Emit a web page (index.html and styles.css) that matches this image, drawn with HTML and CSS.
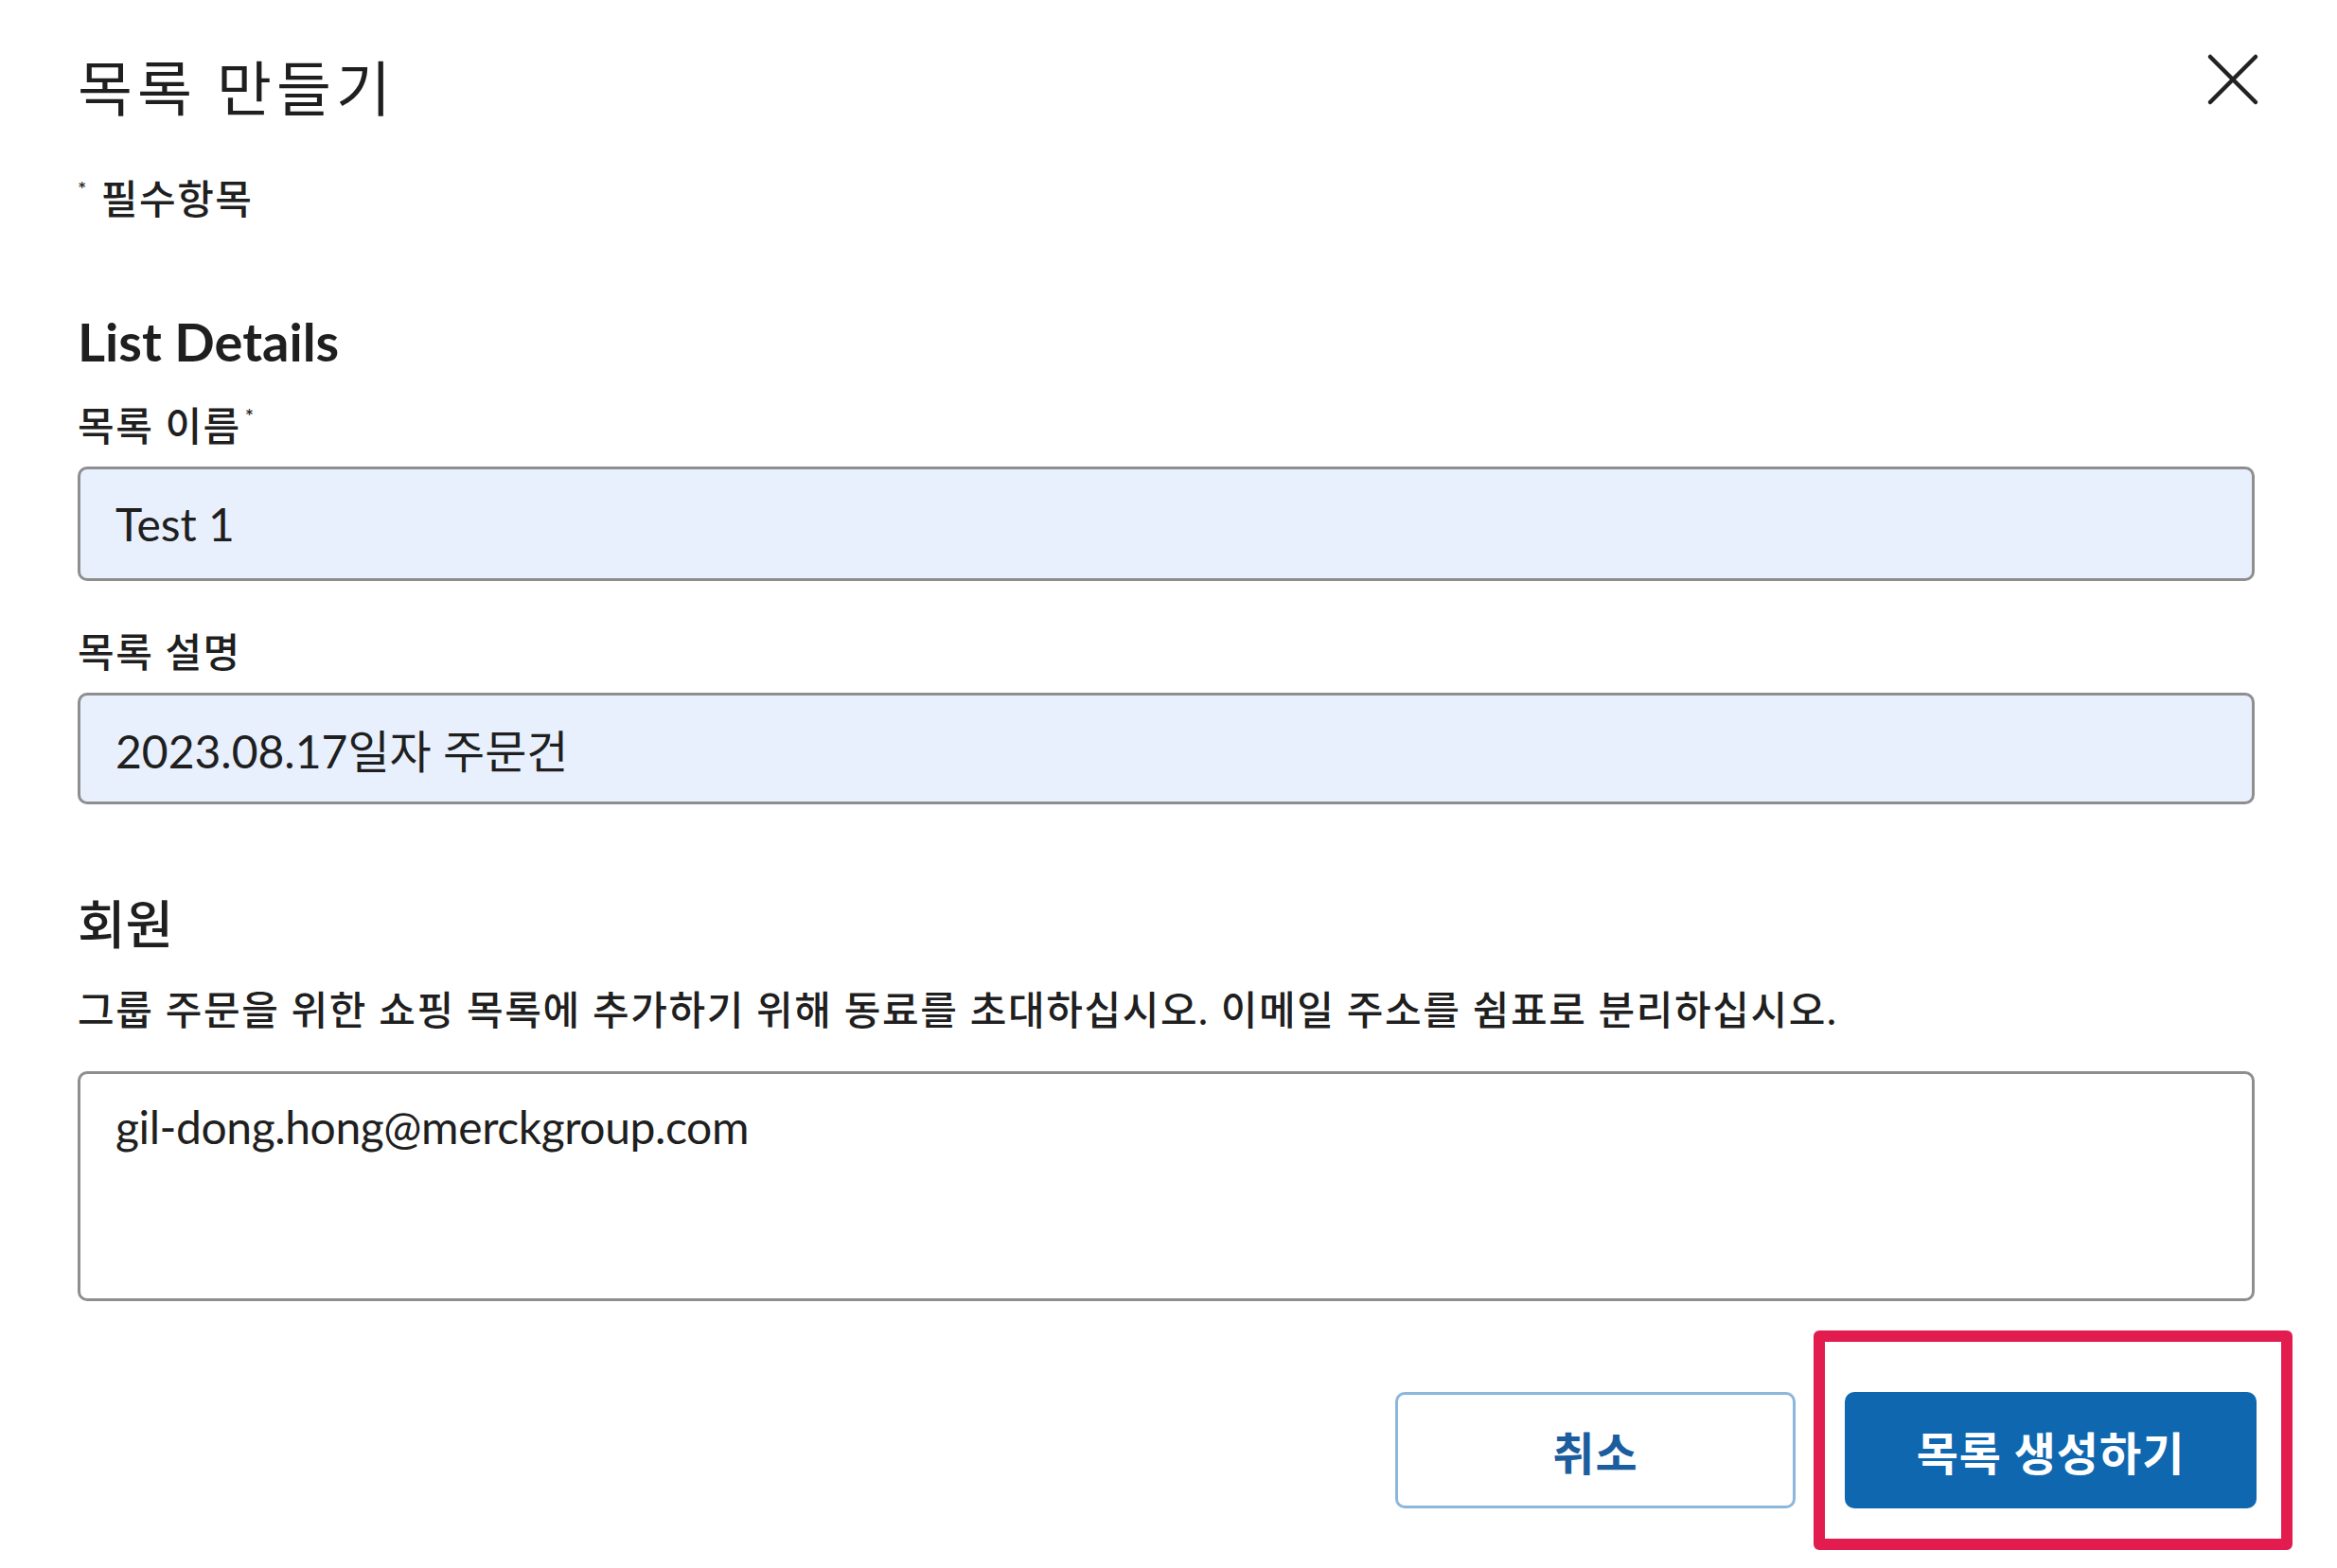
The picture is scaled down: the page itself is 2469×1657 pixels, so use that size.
FILE: index.html
```html
<!doctype html>
<html lang="ko">

<head>
    <meta charset="utf-8">
    <meta name="viewport" content="width=device-width, initial-scale=1">
    <title>목록 만들기</title>
    <link rel="stylesheet" href="styles.css">
</head>

<body>
    <div class="dialog">
        <div class="dialog-head">
            <h1 class="dialog-title">목록 만들기</h1>
            <button class="close-btn" type="button" aria-label="닫기">
                <svg width="56" height="56" viewBox="0 0 56 56">
                    <path d="M4 4 L52 52 M52 4 L4 52" stroke="#222" stroke-width="4.5" stroke-linecap="round" fill="none"/>
                </svg>
            </button>
        </div>
        <p class="required-note"><span class="req">*</span>필수항목</p>

        <h2 class="section-title">List Details</h2>
        <div class="field">
            <label class="field-label" for="list-name">목록 이름<span class="req">*</span></label>
            <input class="field-input" id="list-name" type="text" value="Test 1">
        </div>
        <div class="field field-second">
            <label class="field-label" for="list-desc">목록 설명</label>
            <input class="field-input short" id="list-desc" type="text" value="2023.08.17일자 주문건">
        </div>

        <h2 class="section-title members">회원</h2>
        <p class="section-desc">그룹 주문을 위한 쇼핑 목록에 추가하기 위해 동료를 초대하십시오. 이메일 주소를 쉼표로 분리하십시오.</p>
        <textarea class="field-area" id="members">gil-dong.hong@merckgroup.com</textarea>

        <div class="actions">
            <button class="btn btn-outline" type="button">취소</button>
            <span class="highlight-wrap">
                <button class="btn btn-primary" type="button">목록 생성하기</button>
                <span class="highlight"></span>
            </span>
        </div>
    </div>
</body>

</html>
```

FILE: styles.css
```css
body {
    margin: 0;
    background-color: white;
    color: #1f1f1f;
    font-family: Lato, "Noto Sans CJK KR", sans-serif;
}

.dialog {
    padding: 53px 87px 63px 82px;
}

.dialog-head {
    display: flex;
    justify-content: space-between;
    align-items: flex-start;
}

.dialog-title {
    margin: 0;
    font-size: 63px;
    line-height: 80px;
    font-weight: 400;
    letter-spacing: 5px;
}

.close-btn {
    margin-top: 3px;
    margin-right: -5px;
    padding: 0;
    border: none;
    background: none;
    line-height: 0;
}

.required-note {
    margin: 52px 0 0;
    font-size: 42px;
    line-height: 50px;
    font-weight: 500;
    letter-spacing: 1.5px;
}

.req {
    font-size: 22px;
    vertical-align: top;
    line-height: 30px;
    margin-right: 14px;
}

.field-label .req {
    margin: 0 0 0 4px;
}

.section-title {
    margin: 94px 0 0;
    font-size: 56px;
    line-height: 64px;
    font-weight: 700;
}

.section-title.members {
    margin-top: 93px;
    font-size: 55px;
    line-height: 66px;
    font-weight: 500;
}

.field {
    display: flex;
    flex-direction: column;
    gap: 18px;
    margin-top: 32px;
}

.field-second {
    margin-top: 50px;
}

.field-label {
    font-size: 42px;
    line-height: 50px;
    font-weight: 500;
    letter-spacing: 1.5px;
}

.field-input {
    box-sizing: border-box;
    width: 100%;
    height: 121px;
    padding: 0 0 0 37px;
    border: 3px solid #8e8e8e;
    border-radius: 10px;
    background-color: #e8f0fe;
    color: #1f1f1f;
    font-family: inherit;
    font-size: 48px;
    letter-spacing: 0;
}

.field-input.short {
    height: 118px;
}

.section-desc {
    margin: 33px 0 0;
    font-size: 42px;
    line-height: 50px;
    font-weight: 500;
    letter-spacing: 1.6px;
}

.field-area {
    display: block;
    box-sizing: border-box;
    width: 100%;
    height: 243px;
    margin-top: 40px;
    padding: 27px 37px 0;
    border: 3px solid #8e8e8e;
    border-radius: 10px;
    background-color: white;
    color: #1f1f1f;
    font-family: inherit;
    font-size: 48px;
    line-height: 58px;
    letter-spacing: -0.4px;
    resize: none;
}

.actions {
    display: flex;
    justify-content: flex-end;
    gap: 52px;
    margin-top: 96px;
    margin-right: -2px;
}

.btn {
    box-sizing: border-box;
    height: 123px;
    border-radius: 10px;
    font-family: inherit;
    font-size: 48px;
    font-weight: 700;
    letter-spacing: 1px;
}

.btn-outline {
    width: 423px;
    border: 3px solid #8db6dc;
    background-color: white;
    color: #1b5d9e;
}

.btn-primary {
    width: 435px;
    border: none;
    background-color: #0f67b0;
    color: white;
}

.highlight-wrap {
    position: relative;
    display: flex;
}

/* annotation box drawn over the primary button */
.highlight {
    position: absolute;
    left: -33px;
    top: -65px;
    width: 506px;
    height: 232px;
    box-sizing: border-box;
    border: 12px solid #e31c50;
    border-radius: 6px;
    pointer-events: none;
}
```
